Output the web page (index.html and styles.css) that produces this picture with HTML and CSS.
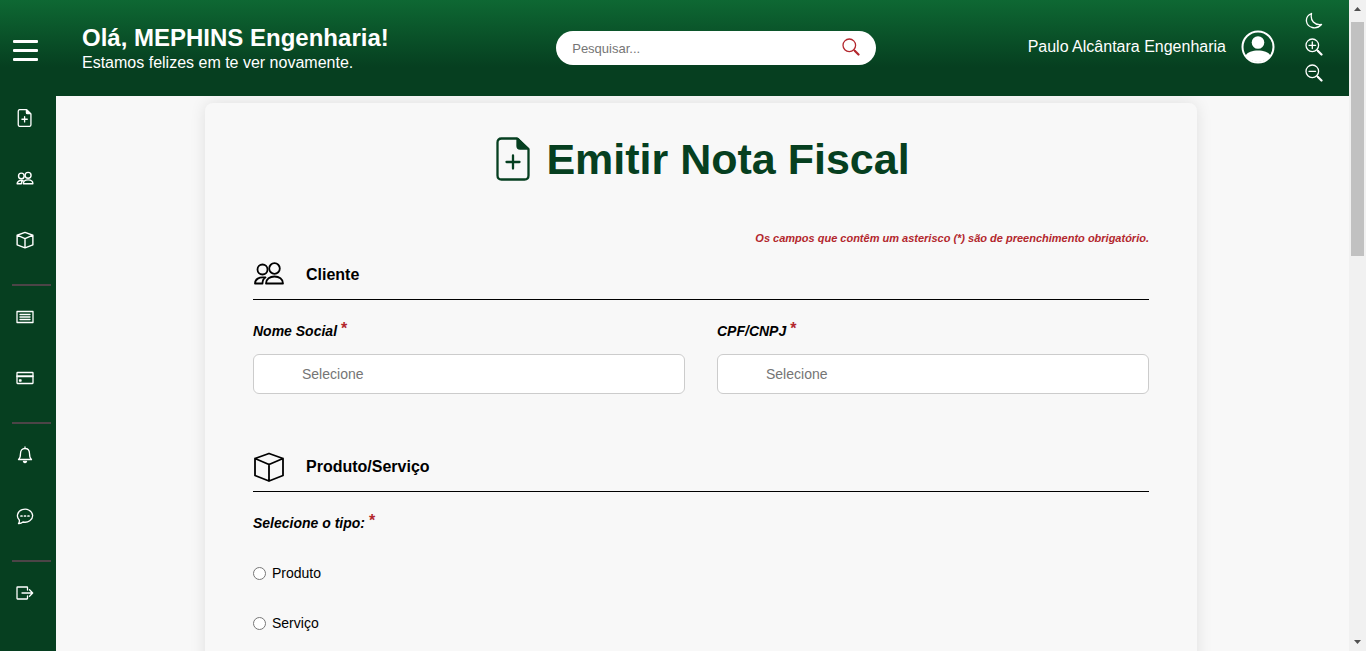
FILE: index.html
```html
<!DOCTYPE html>
<html lang="pt-BR">
<head>
<meta charset="utf-8">
<meta name="viewport" content="width=device-width, initial-scale=1">
<title>Emitir Nota Fiscal</title>
<link rel="stylesheet" href="styles.css">
</head>
<body>
<svg class="sprite" aria-hidden="true">
  <symbol id="doc" viewBox="0 0 36 44"><path d="M5.500 1.500H21L32.500 12V38.500Q32.500 42.500 28.500 42.500H5.500Q1.500 42.500 1.500 38.500V5.500Q1.500 1.500 5.500 1.500Z"/><path class="solid" d="M21.500 2V9Q21.500 11.500 24 11.500H31.500L22 2Z"/><path d="M17 18.500v13M10.500 25h13"/></symbol>
  <symbol id="people" viewBox="0 0 32 32"><circle cx="9.500" cy="10.500" r="5"/><circle cx="21.500" cy="9.500" r="5.300"/><path d="M12 18.500C6 17.500 2 20.500 2 24.500H9.500C9.500 22 10.500 19.500 12.500 18.500M13 24.500C13 20 17 17.500 21.500 17.500S30 20 30 24.500Z"/></symbol>
  <symbol id="box" viewBox="0 0 32 32"><path d="M16 2.500L30 7.500V24.500L16 30L2 24.500V7.500ZM2 7.500L16 13.500L30 7.500M16 13.500V30"/></symbol>
  <symbol id="list" viewBox="0 0 18 18"><path d="M1 3.500h16v11H1ZM4 6.500h10M4 9h10M4 11.500h10"/></symbol>
  <symbol id="card" viewBox="0 0 18 18"><path d="M1.500 3.500h15q.5 0 .5.500v10q0 .5-.5.500h-15q-.5 0-.5-.500V4q0-.5.500-.500Z"/><path class="solid" d="M1 7h16v.5H1ZM3.500 11h1.500v1h-1.500z"/></symbol>
  <symbol id="bell" viewBox="0 0 18 18"><path d="M2.500 13.500Q4.500 12 4.500 7.500C4.500 4.500 6 2.500 9 2.500S13.500 4.500 13.500 7.500Q13.500 12 15.500 13.500ZM9 1v1.500"/><path class="solid" d="M7.500 15.500h3q-1.500 2-3 0Z"/></symbol>
  <symbol id="chat" viewBox="0 0 18 18"><path d="M3.300 13A7.600 6.500 0 1 1 7 15Q5 16.700 2.500 16.500Q3.700 15 3.300 13Z"/><path d="M5 9h1M8.500 9h1M12 9h1" stroke-width="1.700"/></symbol>
  <symbol id="exit" viewBox="0 0 18 18"><path d="M11.500 6V3.500Q11.500 3 11 3H1.500Q1 3 1 3.500v11q0 .5.500.500H11q.5 0 .5-.500V12M6 9h10.500M13.500 5.800L16.700 9L13.500 12.200"/></symbol>
  <symbol id="moon" viewBox="0 0 18 18"><path d="M6.500 1.500C3 3 1 6 1.500 9.500C2.500 15.500 11 18.500 16.500 12.500C9.500 13.500 5 8.500 6.500 1.500Z"/></symbol>
  <symbol id="search" viewBox="0 0 18 18"><circle cx="7.300" cy="7.300" r="6.300"/><path d="M12 12l1.200 1.200"/><path d="M13 13l3.500 3.500" stroke-width="2.200"/></symbol>
  <symbol id="plus" viewBox="0 0 18 18"><path d="M7.300 4v6.600M4 7.300h6.600"/></symbol>
  <symbol id="minus" viewBox="0 0 18 18"><path d="M4 7.300h6.600"/></symbol>
</svg>
<div class="app">
  <header class="header">
    <button class="menu" aria-label="Menu"><span></span><span></span><span></span></button>
    <div class="greeting">
      <strong class="hello">Olá, MEPHINS Engenharia!</strong>
      <span>Estamos felizes em te ver novamente.</span>
    </div>
    <form class="search">
      <input type="search" placeholder="Pesquisar..." aria-label="Pesquisar">
      <button type="button" class="search-button" aria-label="Buscar"><svg class="icon"><use href="#search"/></svg></button>
    </form>
    <div class="user">
      <span>Paulo Alcântara Engenharia</span>
      <svg class="avatar" viewBox="0 0 34 34" aria-hidden="true"><circle class="ring" cx="17" cy="17" r="15.500"/><circle cx="17" cy="12.500" r="6.300"/><path d="M4.500 25.500C8 18.700 26 18.700 29.500 25.500Q25 32 17 32T4.500 25.500Z"/></svg>
    </div>
    <div class="tools">
      <button aria-label="Modo escuro"><svg class="icon"><use href="#moon"/></svg></button>
      <button aria-label="Aumentar zoom"><svg class="icon"><use href="#search"/><use href="#plus"/></svg></button>
      <button aria-label="Diminuir zoom"><svg class="icon"><use href="#search"/><use href="#minus"/></svg></button>
    </div>
  </header>
  <div class="body">
    <nav class="sidebar" aria-label="Principal">
      <div class="group">
        <a href="#" aria-label="Emitir nota"><svg class="icon doc-small"><use href="#doc"/></svg></a>
        <a href="#" aria-label="Clientes"><svg class="icon large-art"><use href="#people"/></svg></a>
        <a href="#" aria-label="Produtos"><svg class="icon large-art"><use href="#box"/></svg></a>
      </div>
      <div class="group">
        <a href="#" aria-label="Notas"><svg class="icon"><use href="#list"/></svg></a>
        <a href="#" aria-label="Pagamentos"><svg class="icon"><use href="#card"/></svg></a>
      </div>
      <div class="group">
        <a href="#" aria-label="Notificações"><svg class="icon"><use href="#bell"/></svg></a>
        <a href="#" aria-label="Mensagens"><svg class="icon"><use href="#chat"/></svg></a>
      </div>
      <div class="group">
        <a href="#" aria-label="Sair"><svg class="icon"><use href="#exit"/></svg></a>
      </div>
    </nav>
    <main class="content">
      <form class="panel">
        <h1 class="title"><svg class="title-icon" aria-hidden="true"><use href="#doc"/></svg>Emitir Nota Fiscal</h1>
        <p class="note">Os campos que contêm um asterisco (*) são de preenchimento obrigatório.</p>
        <section class="section">
          <h2 class="section-title"><svg class="section-icon" aria-hidden="true"><use href="#people"/></svg>Cliente</h2>
          <div class="fields">
            <div class="field">
              <label class="label" for="nome">Nome Social <span class="required">*</span></label>
              <input class="text-input" id="nome" type="text" placeholder="Selecione">
            </div>
            <div class="field">
              <label class="label" for="cpf">CPF/CNPJ <span class="required">*</span></label>
              <input class="text-input" id="cpf" type="text" placeholder="Selecione">
            </div>
          </div>
        </section>
        <section class="section">
          <h2 class="section-title"><svg class="section-icon" aria-hidden="true"><use href="#box"/></svg>Produto/Serviço</h2>
          <fieldset class="choices">
            <legend class="label">Selecione o tipo: <span class="required">*</span></legend>
            <label class="choice"><input type="radio" name="tipo">Produto</label>
            <label class="choice"><input type="radio" name="tipo">Serviço</label>
          </fieldset>
        </section>
      </form>
    </main>
  </div>
</div>
<div class="scrollbar" aria-hidden="true">
  <svg class="arrow" viewBox="0 0 17 22"><path d="M5 11h7L8.500 7Z"/></svg>
  <div class="thumb"></div>
  <svg class="arrow" viewBox="0 0 17 22"><path d="M5 11h7L8.500 15Z"/></svg>
</div>
</body>
</html>
```

FILE: styles.css
```css
* { box-sizing: border-box; }

body {
  display: flex;
  height: 100vh;
  margin: 0;
  overflow: hidden;
  background: #f8f8f8;
  color: #000;
  font: 16px/18px "Liberation Sans", Arial, sans-serif;
}

button {
  padding: 0;
  border: 0;
  background: none;
  color: inherit;
  cursor: pointer;
}

.sprite { position: absolute; width: 0; height: 0; }

.icon, .title-icon, .section-icon {
  display: block;
  flex: none;
  fill: none;
  stroke: currentColor;
  stroke-width: 1.3;
  stroke-linecap: round;
  stroke-linejoin: round;
}
.icon { width: 18px; height: 18px; }
.large-art { stroke-width: 2.5; }
.doc-small { stroke-width: 3.2; }
.solid { fill: currentColor; }

.app {
  display: flex;
  flex: 1;
  flex-direction: column;
  min-width: 0;
}

.header {
  display: grid;
  grid-template-columns: 44px 7fr 320px 6fr 18px;
  align-items: center;
  flex: none;
  height: 96px;
  padding: 0 26px 0 12px;
  background: linear-gradient(#0e6833, #063f20 70%);
  color: #fff;
}

.menu {
  display: flex;
  flex-direction: column;
  gap: 6px;
  width: 26px;
  margin-top: 5px;
  padding-left: 1px;
}
.menu span { height: 3px; border-radius: 1px; background: #fff; }

.greeting {
  display: flex;
  flex-direction: column;
  gap: 2px;
  padding-left: 26px;
  white-space: nowrap;
}
.hello { font-size: 24px; line-height: 28px; }
.greeting span { line-height: 18px; }

.search {
  display: flex;
  align-items: center;
  height: 34px;
  padding: 0 16px;
  border-radius: 17px;
  background: #fff;
}
.search input {
  flex: 1;
  min-width: 0;
  padding: 0;
  border: 0;
  outline: 0;
  background: none;
  font: 13px "Liberation Sans", Arial, sans-serif;
}
.search-button { padding-bottom: 2px; color: #b3272d; }

.user {
  display: flex;
  align-items: center;
  justify-content: flex-end;
  gap: 15px;
  padding: 0 30px 2px 0;
  white-space: nowrap;
}
.avatar { width: 34px; height: 34px; fill: #fff; }
.ring { fill: none; stroke: #fff; stroke-width: 2; }

.tools { display: flex; flex-direction: column; gap: 8px; padding-bottom: 2px; }

.body { display: flex; flex: 1; min-height: 0; }

.sidebar {
  flex: none;
  width: 56px;
  padding: 13px 5px 0 12px;
  background: #063f20;
  color: #fff;
}
.group { display: flex; flex-direction: column; gap: 43px; }
.group + .group {
  margin-top: 35px;
  padding-top: 22px;
  border-top: 2px solid #4c4447;
}
.group a { width: 26px; padding-left: 4px; color: inherit; }

.content {
  flex: 1;
  min-width: 0;
  padding: 7px 152px 0 149px;
  overflow: hidden;
}
.panel {
  min-height: 700px;
  padding: 32px 48px;
  border-radius: 8px;
  background: #f8f8f8;
  box-shadow: 0 0 16px rgba(0, 0, 0, .1);
}

.title {
  display: flex;
  align-items: center;
  justify-content: center;
  gap: 14px;
  margin: 0;
  padding-left: 4px;
  color: #063f20;
  font-size: 43px;
  line-height: 48px;
}
.title-icon { width: 36px; height: 44px; stroke-width: 2.3; }

.note {
  margin: 46px 0 0;
  color: #b3272d;
  font-size: 11px;
  font-style: italic;
  font-weight: bold;
  text-align: right;
}

.section { margin-bottom: 46px; }
.section-title {
  display: flex;
  align-items: center;
  gap: 21px;
  height: 52px;
  margin: 0 0 16px;
  padding-top: 3px;
  border-bottom: 1px solid #000;
  font-size: 16px;
}
.note + .section .section-title { margin-top: 1px; }
.section-icon { width: 32px; height: 32px; stroke-width: 1.8; }

.fields { display: grid; grid-template-columns: 1fr 1fr; gap: 32px; }
.label {
  display: block;
  height: 30px;
  padding: 6px 0 0;
  font-size: 14px;
  font-style: italic;
  font-weight: bold;
  line-height: 18px;
}
.required {
  color: #b3272d;
  font-size: 16px;
  font-style: normal;
  line-height: 1px;
  vertical-align: 2px;
}

.text-input {
  display: block;
  width: 100%;
  height: 40px;
  margin-top: 8px;
  padding: 0 48px;
  border: 1px solid #ccc;
  border-radius: 6px;
  background: #fff;
  font: 14px "Liberation Sans", Arial, sans-serif;
}
::placeholder { color: #757575; opacity: 1; }

.choices { margin: 0; padding: 0; border: 0; }
.choices .label { height: 24px; }
.choice {
  display: flex;
  align-items: center;
  gap: 6px;
  height: 18px;
  margin-top: 32px;
  font-size: 14px;
}
.choice input { width: 13px; height: 13px; margin: 0; }

.scrollbar {
  display: flex;
  flex: none;
  flex-direction: column;
  align-items: center;
  width: 17px;
  background: #f1f1f1;
}
.arrow { flex: none; width: 17px; height: 22px; fill: #505050; }
.thumb { width: 13px; height: 36%; background: #c1c1c1; }
.thumb + .arrow { margin-top: auto; }
```
